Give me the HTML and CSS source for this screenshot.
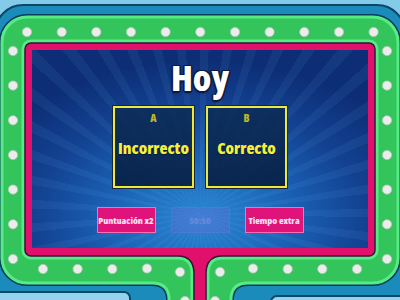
FILE: index.html
```html
<!DOCTYPE html>
<html lang="es">
<head>
  <meta charset="UTF-8">
  <meta name="viewport" content="width=device-width, initial-scale=1.0">
  <title>Concurso - Hoy</title>
  <link rel="stylesheet" href="styles.css">
</head>
<body>
  <div class="stage">
    <!-- decorative game-show frame, drawn behind the screen -->
    <svg class="frame" width="400" height="300" viewBox="0 0 400 300">
      <rect x="-5" y="5" width="410" height="330" rx="28" fill="#1a8bbb" stroke="#0c4766" stroke-width="2"/>
      <rect x="-20" y="292" width="150" height="30" rx="6" fill="#93d3ee" stroke="#0c4766" stroke-width="2"/>
      <rect x="271" y="296" width="150" height="30" rx="6" fill="#93d3ee" stroke="#0c4766" stroke-width="2"/>

      <path d="M2,42 A25,25 0 0 1 27,17 H373 A25,25 0 0 1 398,42 V258 A25,25 0 0 1 373,283 H248 Q232,283 231,298 V310 H169 V298 Q168,283 152,283 H27 A25,25 0 0 1 2,258 Z"
            fill="none" stroke="#0c3b58" stroke-width="6"/>
      <path d="M2,42 A25,25 0 0 1 27,17 H373 A25,25 0 0 1 398,42 V258 A25,25 0 0 1 373,283 H248 Q232,283 231,298 V310 H169 V298 Q168,283 152,283 H27 A25,25 0 0 1 2,258 Z"
            fill="#34c45c" stroke="#56ec85" stroke-width="3"/>

      <path d="M31,43 H369 A6,6 0 0 1 375,49 V250 A6,6 0 0 1 369,256 H222 Q207,256 206,272 V310 H194 V272 Q193,256 178,256 H31 A6,6 0 0 1 25,250 V49 A6,6 0 0 1 31,43 Z"
            fill="none" stroke="#56ec85" stroke-width="7"/>
      <path d="M31,43 H369 A6,6 0 0 1 375,49 V250 A6,6 0 0 1 369,256 H222 Q207,256 206,272 V310 H194 V272 Q193,256 178,256 H31 A6,6 0 0 1 25,250 V49 A6,6 0 0 1 31,43 Z"
            fill="#e0106c" stroke="#3b1036" stroke-width="1.5"/>

      <g fill="#ececec" stroke="#b7c8bd" stroke-width="0.8">
        <!-- top row -->
        <circle cx="27" cy="32" r="4.6"/><circle cx="61.7" cy="32" r="4.6"/><circle cx="96.3" cy="32" r="4.6"/>
        <circle cx="131" cy="32" r="4.6"/><circle cx="165.6" cy="32" r="4.6"/><circle cx="200.3" cy="32" r="4.6"/>
        <circle cx="235" cy="32" r="4.6"/><circle cx="269.6" cy="32" r="4.6"/><circle cx="304.3" cy="32" r="4.6"/>
        <circle cx="339" cy="32" r="4.6"/><circle cx="373.6" cy="32" r="4.6"/>
        <!-- sides -->
        <circle cx="13" cy="51" r="4.6"/><circle cx="13" cy="85.6" r="4.6"/><circle cx="13" cy="120.3" r="4.6"/>
        <circle cx="13" cy="155" r="4.6"/><circle cx="13" cy="189.6" r="4.6"/><circle cx="13" cy="224.3" r="4.6"/>
        <circle cx="13" cy="259" r="4.6"/>
        <circle cx="387" cy="51" r="4.6"/><circle cx="387" cy="85.6" r="4.6"/><circle cx="387" cy="120.3" r="4.6"/>
        <circle cx="387" cy="155" r="4.6"/><circle cx="387" cy="189.6" r="4.6"/><circle cx="387" cy="224.3" r="4.6"/>
        <circle cx="387" cy="259" r="4.6"/>
        <!-- bottom -->
        <circle cx="43" cy="269" r="4.6"/><circle cx="77.6" cy="269" r="4.6"/><circle cx="112.3" cy="269" r="4.6"/>
        <circle cx="147" cy="268.5" r="4.6"/><circle cx="180" cy="272" r="4.6"/>
        <circle cx="220" cy="272" r="4.6"/><circle cx="253" cy="268.5" r="4.6"/><circle cx="287.7" cy="269" r="4.6"/>
        <circle cx="322.3" cy="269" r="4.6"/><circle cx="357" cy="269" r="4.6"/>
        <circle cx="185" cy="301" r="4.6"/><circle cx="215" cy="301" r="4.6"/>
      </g>
    </svg>

    <div class="screen">
      <h1 class="question">Hoy</h1>

      <div class="answers">
        <div class="answer">
          <span class="letter">A</span>
          <span class="answer-text">Incorrecto</span>
        </div>
        <div class="answer">
          <span class="letter">B</span>
          <span class="answer-text">Correcto</span>
        </div>
      </div>

      <div class="powerups">
        <button class="powerup">Puntuación x2</button>
        <button class="powerup used">50:50</button>
        <button class="powerup">Tiempo extra</button>
      </div>
    </div>
  </div>
</body>
</html>
```

FILE: styles.css
```css
body {
  margin: 0;
  background: #84cbea;
  font-family: "Open Sans", "Liberation Sans", sans-serif;
  font-stretch: 75%;
  overflow: hidden;
}

.stage {
  position: relative;
  width: 400px;
  height: 300px;
  overflow: hidden;
  padding-top: 50px;
  box-sizing: border-box;
}

.frame {
  position: absolute;
  top: 0;
  left: 0;
}

.screen {
  position: relative;
  margin: 0 32px;
  height: 198px;
  display: flex;
  flex-direction: column;
  align-items: center;
  background:
    repeating-conic-gradient(from 0deg at 50% 83%, rgba(120, 200, 255, 0.07) 0deg 3deg, transparent 3deg 8deg),
    radial-gradient(ellipse 70% 80% at 50% 85%, #2a88d4 0%, #1b62b6 38%, #134292 70%, #0d2e76 100%);
}

.question {
  margin: 8px 0 0;
  height: 40px;
  line-height: 40px;
  font-size: 36px;
  font-weight: 800;
  font-stretch: 75%;
  color: #fff;
  text-shadow:
    -1.5px 0 #10183a, 1.5px 0 #10183a, 0 -1.5px #10183a, 0 1.5px #10183a,
    -1px -1px #10183a, 1px -1px #10183a, -1px 1px #10183a, 1px 1px #10183a,
    0 2px 3px rgba(0, 0, 0, 0.4);
}

.answers {
  display: flex;
  gap: 12px;
  margin-top: 8px;
}

.answer {
  width: 77px;
  height: 78px;
  border: 2px solid #ece93a;
  box-shadow: 0 0 0 1px #17263e;
  background: linear-gradient(rgba(12, 44, 86, 0.85), rgba(6, 28, 62, 0.88));
  display: flex;
  flex-direction: column;
  align-items: center;
}

.letter {
  margin-top: 2px;
  line-height: 15px;
  font-size: 11px;
  font-weight: 800;
  color: #beb62a;
}

.answer-text {
  margin-top: 13px;
  line-height: 20px;
  font-size: 16.5px;
  font-weight: 800;
  color: #f4f03c;
  text-shadow: 0 1px 1px #0a1a30;
}

.powerups {
  display: flex;
  gap: 15px;
  margin-top: 19px;
}

.powerup {
  width: 59px;
  height: 26px;
  padding: 0;
  border: 1px solid #ff6cb4;
  background: #e0137a;
  color: #ffe2f0;
  font-family: inherit;
  font-stretch: 75%;
  font-size: 9.5px;
  font-weight: 800;
  white-space: nowrap;
}

.powerup.used {
  background: rgba(130, 100, 210, 0.25);
  border-color: rgba(150, 130, 230, 0.18);
  color: rgba(140, 150, 225, 0.5);
}
```
